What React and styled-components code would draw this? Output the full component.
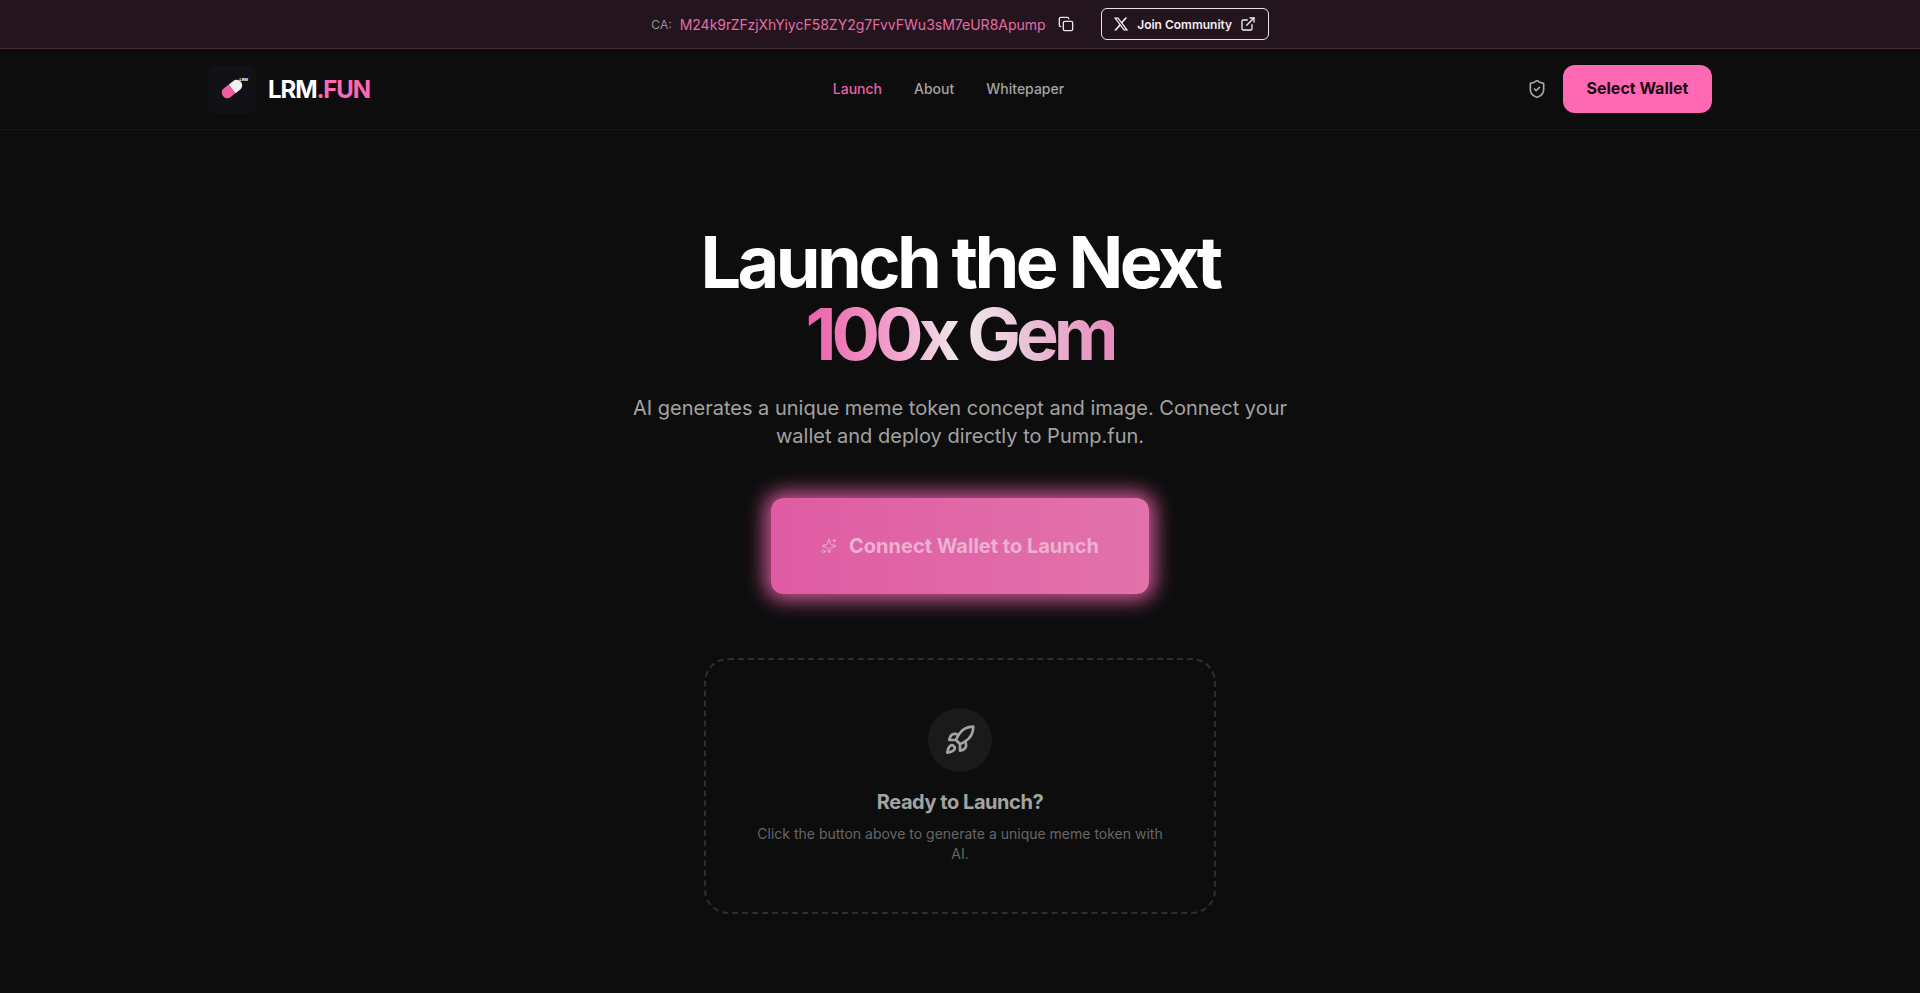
import styled, { createGlobalStyle } from "styled-components";
import { Copy, ExternalLink, Rocket, ShieldCheck, Sparkles } from "lucide-react";
import { FaXTwitter } from "react-icons/fa6";

const GlobalStyle = createGlobalStyle`
  * {
    box-sizing: border-box;
  }

  body {
    margin: 0;
    background: #0d0d0e;
    color: #fff;
    font-family: Inter, "Liberation Sans", sans-serif;
  }
`;

const Page = styled.div`
  min-height: 993px;
  display: flex;
  flex-direction: column;
`;

const TopBanner = styled.div`
  height: 49px;
  display: flex;
  align-items: center;
  justify-content: center;
  background: #23141e;
  border-bottom: 1px solid #43303b;
`;

const CaLabel = styled.span`
  font-size: 12px;
  color: #9a9398;
  margin-right: 8px;
`;

const Address = styled.span`
  font-size: 14px;
  color: #e56ba8;
`;

const CopyButton = styled.button`
  display: flex;
  padding: 0;
  margin: 0 27px 0 12px;
  background: none;
  border: 0;
  color: #e5e5e5;
`;

const CommunityLink = styled.a`
  width: 168px;
  height: 32px;
  display: flex;
  align-items: center;
  justify-content: center;
  gap: 8px;
  border: 1px solid #e8e4e6;
  border-radius: 6px;
  color: #f0eef0;
  font-size: 12px;
  font-weight: 600;
`;

const Navbar = styled.header`
  height: 81px;
  border-bottom: 1px solid #18181a;
`;

const NavInner = styled.div`
  max-width: 1536px;
  height: 100%;
  margin: 0 auto;
  padding: 0 16px;
  display: flex;
  align-items: center;
  justify-content: space-between;
`;

const Brand = styled.div`
  display: flex;
  align-items: center;
  gap: 12px;
`;

const LogoTile = styled.div`
  position: relative;
  width: 48px;
  height: 48px;
  display: flex;
  align-items: center;
  justify-content: center;
  background: #121115;
  border-radius: 6px;
`;

const LogoTag = styled.span`
  position: absolute;
  top: 13px;
  right: 8px;
  font-size: 4px;
  font-weight: 700;
  line-height: 1;
`;

const BrandName = styled.span`
  font-size: 24px;
  font-weight: 700;
  letter-spacing: -1.1px;
`;

const Accent = styled.span`
  color: #ff69b4;
`;

const NavLinks = styled.nav`
  display: flex;
  gap: 32px;
  margin-bottom: 1px;
`;

const NavLink = styled.a`
  font-size: 14px;
  line-height: 20px;
  font-weight: 500;
  color: ${(props) => (props.$active ? "#ec5fa8" : "#a3a3a3")};
`;

const NavActions = styled.div`
  display: flex;
  align-items: center;
  gap: 16px;
`;

const ShieldButton = styled.span`
  display: flex;
  color: #a8a8a8;
`;

const WalletButton = styled.button`
  width: 149px;
  height: 48px;
  padding-bottom: 3px;
  background: #ff69b4;
  border: 0;
  border-radius: 12px;
  color: #1a0a14;
  font-family: inherit;
  font-size: 16px;
  font-weight: 700;
`;

const Main = styled.main`
  display: flex;
  flex-direction: column;
  align-items: center;
  padding-top: 96px;
`;

const Title = styled.h1`
  margin: 0;
  font-size: 72px;
  line-height: 72px;
  font-weight: 700;
  letter-spacing: -3.6px;
  text-align: center;
`;

const GradientText = styled.span`
  display: inline-block;
  letter-spacing: -5.1px;
  background: linear-gradient(90deg, #ec5fa8 0%, #f2a6cf 30%, #efe9ec 50%, #e9bcd4 75%, #e88abc 100%);
  -webkit-background-clip: text;
  background-clip: text;
  color: transparent;
`;

const Subtitle = styled.p`
  width: 672px;
  margin: 24px 0 0;
  font-size: 20px;
  line-height: 28px;
  color: #a3a3a3;
  text-align: center;
`;

const LaunchButton = styled.button`
  width: 378px;
  height: 96px;
  margin-top: 48px;
  display: flex;
  align-items: center;
  justify-content: center;
  gap: 12px;
  background: linear-gradient(90deg, #df5ca3, #e272ab);
  border: 0;
  border-radius: 12px;
  box-shadow: 0 0 20px 6px rgba(255, 105, 180, 0.8);
  color: #eeb0d2;
  font-family: inherit;
  font-size: 20px;
  font-weight: 700;
`;

const EmptyCard = styled.section`
  width: 512px;
  height: 256px;
  margin-top: 64px;
  padding: 48px 32px 0;
  display: flex;
  flex-direction: column;
  align-items: center;
  border: 2px dashed #2e2e30;
  border-radius: 24px;
`;

const IconCircle = styled.div`
  width: 64px;
  height: 64px;
  display: flex;
  align-items: center;
  justify-content: center;
  background: #1a1a1b;
  border-radius: 50%;
  color: #a3a3a3;
`;

const CardTitle = styled.h3`
  margin: 16px 0 0;
  font-size: 20px;
  line-height: 28px;
  font-weight: 700;
  letter-spacing: -0.45px;
  color: #a3a3a3;
`;

const CardText = styled.p`
  margin: 8px 0 0;
  font-size: 14px;
  line-height: 20px;
  color: #666;
  text-align: center;
`;

const PillLogo = () => (
  <svg width="30" height="30" viewBox="0 0 30 30">
    <g transform="rotate(-38 15 15)">
      <path d="M15 9.5 H21 a5.5 5.5 0 0 1 0 11 H15 Z" fill="#f4f0f2" />
      <path d="M15 9.5 H9 a5.5 5.5 0 0 0 0 11 H15 Z" fill="#ee5fa6" />
    </g>
  </svg>
);

const App = () => {
  return (
    <Page>
      <GlobalStyle />
      <TopBanner>
        <CaLabel>CA:</CaLabel>
        <Address>M24k9rZFzjXhYiycF58ZY2g7FvvFWu3sM7eUR8Apump</Address>
        <CopyButton>
          <Copy size={16} />
        </CopyButton>
        <CommunityLink>
          <FaXTwitter size={16} />
          Join Community
          <ExternalLink size={16} />
        </CommunityLink>
      </TopBanner>

      <Navbar>
        <NavInner>
          <Brand>
            <LogoTile>
              <PillLogo />
              <LogoTag>LRM</LogoTag>
            </LogoTile>
            <BrandName>
              LRM<Accent>.FUN</Accent>
            </BrandName>
          </Brand>
          <NavLinks>
            <NavLink $active>Launch</NavLink>
            <NavLink>About</NavLink>
            <NavLink>Whitepaper</NavLink>
          </NavLinks>
          <NavActions>
            <ShieldButton>
              <ShieldCheck size={20} />
            </ShieldButton>
            <WalletButton>Select Wallet</WalletButton>
          </NavActions>
        </NavInner>
      </Navbar>

      <Main>
        <Title>
          Launch the Next
          <br />
          <GradientText>100x Gem</GradientText>
        </Title>
        <Subtitle>
          AI generates a unique meme token concept and image. Connect your
          <br />
          wallet and deploy directly to Pump.fun.
        </Subtitle>
        <LaunchButton>
          <Sparkles size={16} strokeWidth={1.5} />
          Connect Wallet to Launch
        </LaunchButton>
        <EmptyCard>
          <IconCircle>
            <Rocket size={32} />
          </IconCircle>
          <CardTitle>Ready to Launch?</CardTitle>
          <CardText>
            Click the button above to generate a unique meme token with
            <br />
            AI.
          </CardText>
        </EmptyCard>
      </Main>
    </Page>
  );
};

export default App;
